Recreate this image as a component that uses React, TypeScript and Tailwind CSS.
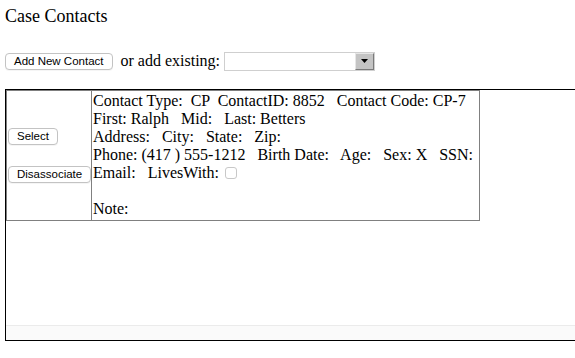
export default function App() {
  const btn =
    "bg-white border border-[#c3c3c3] rounded-[4px] px-2 py-px text-[11.5px] leading-[13px] font-['Liberation_Sans',Arial,sans-serif] text-black whitespace-nowrap shadow-[0_1px_0_rgba(0,0,0,0.04)]"

  return (
    <div className="w-[575px] h-[358px] overflow-hidden bg-white text-black font-['Liberation_Serif','Times_New_Roman',serif]">
      <div className="pl-[5px] pt-[6px]">
        <h1 className="text-[18px] leading-[normal]">Case Contacts</h1>

        {/* add contact row */}
        <div className="mt-[24px] flex items-center h-[20px] text-[16px] leading-[normal]">
          <button className={btn}>Add New Contact</button>
          <span className="ml-[8px]">or add existing:</span>
          <div className="ml-[4px] w-[151px] h-[19px] border border-[#cfcfcf] bg-white flex justify-end">
            <div className="w-[19px] h-full bg-[#c4c4c4] border-t border-l border-[#e6e6e6] border-r border-b border-r-[#7a7a7a] border-b-[#7a7a7a] flex items-center justify-center">
              <svg width="7" height="4" viewBox="0 0 7 4">
                <path d="M0 0h7L3.5 4z" fill="#000" />
              </svg>
            </div>
          </div>
        </div>
      </div>

      {/* contacts list */}
      <div className="ml-[5px] mt-[18px] w-[600px] h-[252px] border border-black flex flex-col">
        <div className="flex w-[474px] h-[131px] border border-[#808080] text-[16px] leading-[normal]">
          <div className="w-[85px] border-r border-[#808080] flex flex-col items-start justify-center gap-[21px] pl-px">
            <button className={btn}>Select</button>
            <button className={btn}>Disassociate</button>
          </div>
          <div className="flex-1 pl-px pt-px whitespace-pre">
            <div>Contact Type:  CP  ContactID: 8852   Contact Code: CP-7</div>
            <div>First: Ralph   Mid:   Last: Betters</div>
            <div>Address:   City:   State:   Zip: </div>
            <div>Phone: (417 ) 555-1212   Birth Date:   Age:   Sex: X   SSN:</div>
            <div className="flex items-center">
              <span>Email:   LivesWith: </span>
              <span className="ml-[2px] w-[12px] h-[12px] border border-[#c8c8c8] rounded-[3px] bg-white" />
            </div>
            <div> </div>
            <div>Note:</div>
          </div>
        </div>
        <div className="flex-1" />
        <div className="h-[15px] bg-[#fafafa] border-t border-[#ebebeb]" />
      </div>
    </div>
  )
}
